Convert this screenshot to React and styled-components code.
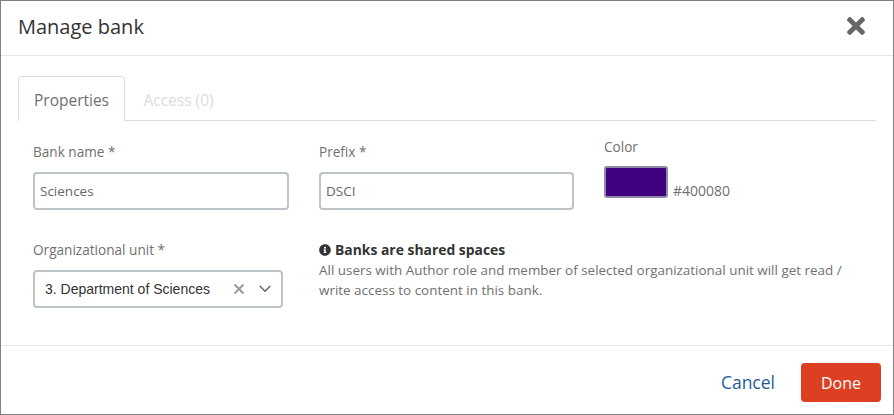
import React from "react";
import styled, { createGlobalStyle } from "styled-components";
import { FaTimes, FaInfoCircle } from "react-icons/fa";

const Global = createGlobalStyle`
  html, body { margin: 0; padding: 0; background: #fff; }
  body { font-family: "Open Sans", sans-serif; color: #333; }
  * { box-sizing: border-box; }
`;

const Modal = styled.div`
  width: 894px;
  height: 415px;
  border: 1px solid #808080;
  display: flex;
  flex-direction: column;
  background: #fff;
`;

const Header = styled.header`
  height: 55px;
  flex: none;
  border-bottom: 1px solid #e5e5e5;
  display: flex;
  align-items: center;
  justify-content: space-between;
  padding: 0 24px 5px 17px;
`;

const Title = styled.h1`
  margin: 0;
  font-size: 20px;
  font-weight: 400;
  color: #333;
  line-height: 28px;
  position: relative;
  top: 1px;
`;

const Close = styled.button`
  border: 0;
  background: none;
  padding: 0;
  display: flex;
  color: #666;
  font-size: 26px;
`;

const Body = styled.main`
  flex: 1;
  padding: 20px 17px 0;
`;

const Tabs = styled.nav`
  display: flex;
  height: 45px;
  border-bottom: 1px solid #ddd;
`;

const Tab = styled.div`
  width: ${(p) => p.$width}px;
  height: ${(p) => (p.$active ? 45 : 44)}px;
  padding-top: 12px;
  font-size: 15.5px;
  line-height: 22px;
  text-align: center;
  color: ${(p) => (p.$active ? "#707070" : "#dcdcdc")};
  background: #fff;
  border: 1px solid ${(p) => (p.$active ? "#ddd" : "transparent")};
  border-bottom: 0;
  border-radius: 4px 4px 0 0;
`;

const Form = styled.div`
  display: grid;
  grid-template-columns: 256px 255px 1fr;
  column-gap: 30px;
  padding: 0 15px;
`;

const Field = styled.div`
  display: flex;
  flex-direction: column;
  padding-top: ${(p) => p.$top}px;
  height: ${(p) => p.$height}px;
`;

const Label = styled.label`
  font-size: 13.6px;
  line-height: 20px;
  color: #707070;
  margin-bottom: ${(p) => p.$gap}px;
`;

const Input = styled.div`
  height: 38px;
  border: 2px solid #bdc3c7;
  border-radius: 4px;
  padding: 0 5px;
  font-size: 13.5px;
  line-height: 34px;
  color: #666;
`;

const ColorRow = styled.div`
  display: flex;
  align-items: flex-end;
  gap: 5px;
`;

const Swatch = styled.div`
  width: 64px;
  height: 32px;
  background: #400080;
  border: 2px solid #8f8aa8;
  border-radius: 3px;
`;

const Hex = styled.span`
  font-size: 14px;
  line-height: 20px;
  color: #707070;
  margin-bottom: -3px;
`;

const Select = styled.div`
  width: 250px;
  height: 38px;
  border: 2px solid #bdc3c7;
  border-radius: 4px;
  display: flex;
  align-items: center;
  padding: 0 10px 0 10px;
  font-family: "Liberation Sans", Arial, sans-serif;
  font-size: 14px;
  color: #333;
`;

const SelectValue = styled.span`
  flex: 1;
`;

const SelectIcons = styled.span`
  display: flex;
  align-items: center;
  gap: 14px;
`;

const ClearIcon = styled.svg`
  color: #999;
`;

const ChevronIcon = styled.svg`
  color: #666;
`;

const Info = styled.div`
  grid-column: 2 / 4;
  padding-top: 1px;
  font-size: 13.45px;
  line-height: 20px;
  color: #707070;
  width: 530px;
`;

const InfoTitle = styled.div`
  display: flex;
  align-items: center;
  gap: 4px;
  font-weight: 700;
  color: #333;
  font-size: 13.9px;
  line-height: 20px;
  svg { font-size: 12px; }
`;

const Footer = styled.footer`
  height: 69px;
  flex: none;
  border-top: 1px solid #e5e5e5;
  display: flex;
  align-items: flex-start;
  justify-content: flex-end;
  padding: 17px 12px 0 0;
`;

const Cancel = styled.a`
  font-size: 17.5px;
  line-height: 39px;
  color: #1f5c99;
  margin-right: 26px;
`;

const Done = styled.button`
  width: 80px;
  height: 39px;
  border: 0;
  border-radius: 4px;
  background: #dc3f22;
  color: #fff;
  font-family: inherit;
  font-size: 16px;
`;

export default function App() {
  return (
    <>
      <Global />
      <Modal>
        <Header>
          <Title>Manage bank</Title>
          <Close aria-label="Close"><FaTimes /></Close>
        </Header>
        <Body>
          <Tabs>
            <Tab $active $width={107}>Properties</Tab>
            <Tab $width={107}>Access (0)</Tab>
          </Tabs>
          <Form>
            <Field $top={21} $height={118}>
              <Label $gap={10}>Bank name *</Label>
              <Input>Sciences</Input>
            </Field>
            <Field $top={21} $height={118}>
              <Label $gap={10}>Prefix *</Label>
              <Input>DSCI</Input>
            </Field>
            <Field $top={16} $height={118}>
              <Label $gap={9}>Color</Label>
              <ColorRow>
                <Swatch />
                <Hex>#400080</Hex>
              </ColorRow>
            </Field>
            <Field $top={1} $height={80}>
              <Label $gap={10}>Organizational unit *</Label>
              <Select>
                <SelectValue>3. Department of Sciences</SelectValue>
                <SelectIcons>
                  <ClearIcon width="12" height="12" viewBox="0 0 12 12" fill="none" stroke="currentColor" strokeWidth="2"><path d="M1.5 1.5l9 9M10.5 1.5l-9 9" /></ClearIcon>
                  <ChevronIcon width="12" height="8" viewBox="0 0 12 8" fill="none" stroke="currentColor" strokeWidth="1.5"><path d="M.8 1l5.2 5.2L11.2 1" /></ChevronIcon>
                </SelectIcons>
              </Select>
            </Field>
            <Info>
              <InfoTitle><FaInfoCircle />Banks are shared spaces</InfoTitle>
              All users with Author role and member of selected organizational unit will get read / write access to content in this bank.
            </Info>
          </Form>
        </Body>
        <Footer>
          <Cancel>Cancel</Cancel>
          <Done>Done</Done>
        </Footer>
      </Modal>
    </>
  );
}
